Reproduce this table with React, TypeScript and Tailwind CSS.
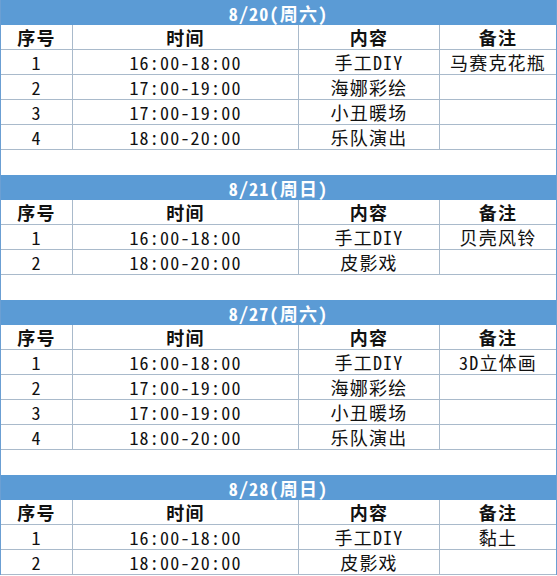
import React from 'react';

type Row = [string, string, string, string];

interface Section {
  date: string;
  rows: Row[];
  spacer: boolean;
}

const sections: Section[] = [
  {
    date: '8/20(周六)',
    rows: [
      ['1', '16:00-18:00', '手工DIY', '马赛克花瓶'],
      ['2', '17:00-19:00', '海娜彩绘', ''],
      ['3', '17:00-19:00', '小丑暖场', ''],
      ['4', '18:00-20:00', '乐队演出', ''],
    ],
    spacer: true,
  },
  {
    date: '8/21(周日)',
    rows: [
      ['1', '16:00-18:00', '手工DIY', '贝壳风铃'],
      ['2', '18:00-20:00', '皮影戏', ''],
    ],
    spacer: true,
  },
  {
    date: '8/27(周六)',
    rows: [
      ['1', '16:00-18:00', '手工DIY', '3D立体画'],
      ['2', '17:00-19:00', '海娜彩绘', ''],
      ['3', '17:00-19:00', '小丑暖场', ''],
      ['4', '18:00-20:00', '乐队演出', ''],
    ],
    spacer: true,
  },
  {
    date: '8/28(周日)',
    rows: [
      ['1', '16:00-18:00', '手工DIY', '黏土'],
      ['2', '18:00-20:00', '皮影戏', ''],
    ],
    spacer: false,
  },
];

const header: Row = ['序号', '时间', '内容', '备注'];

const TableRow: React.FC<{ cells: Row; bold?: boolean }> = ({ cells, bold }) => (
  <div className="grid grid-cols-[72px_226px_141px_116px] h-[25px] border-b border-[#a9bacb]">
    {cells.map((c, i) => (
      <div
        key={i}
        className={`flex items-center justify-center ${i < 3 ? 'border-r border-[#a9bacb]' : ''} ${
          bold ? 'font-bold' : ''
        }`}
      >
        {c}
      </div>
    ))}
  </div>
);

export default function App() {
  return (
    <div className="w-[557px] h-[576px] bg-white overflow-hidden">
      <div className="border-x border-[#6b9fd3] text-[18px] leading-none text-[#111] tracking-[1.2px] font-['Noto_Sans_CJK_SC',sans-serif] [font-feature-settings:'hwid']">
        {sections.map((s) => (
          <div key={s.date}>
            <div className="h-[25px] bg-[#5b9bd5] flex items-center justify-center text-white font-bold">
              {s.date}
            </div>
            <TableRow cells={header} bold />
            {s.rows.map((r, i) => (
              <TableRow key={i} cells={r} />
            ))}
            {s.spacer && <div className="h-[25px] bg-white" />}
          </div>
        ))}
      </div>
    </div>
  );
}
